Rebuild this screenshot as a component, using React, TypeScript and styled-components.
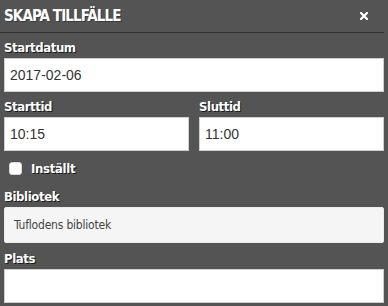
import styled, { createGlobalStyle } from "styled-components";

const GlobalStyle = createGlobalStyle`
   html, body {
      margin: 0;
      padding: 0;
      background: #545454;
   }
`;

const Dialog = styled.div`
   width: 388px;
   height: 306px;
   background: #545454;
   box-sizing: border-box;
   overflow: hidden;
   font-family: "DejaVu Sans Condensed", "DejaVu Sans", sans-serif;
`;

const Header = styled.div`
   display: flex;
   align-items: center;
   justify-content: space-between;
   height: 32px;
   margin-right: 4px;
   padding-left: 4px;
   padding-right: 16px;
   border-bottom: 1px solid #2f2f2f;
`;

const Title = styled.h1`
   margin: 0;
   font-size: 15px;
   font-weight: bold;
   color: #fff;
   text-transform: uppercase;
   letter-spacing: -0.9px;
   text-shadow: 1px 1px 0 #3a3a3a;
`;

const Close = styled.button`
   border: none;
   background: none;
   padding: 0;
   width: 8px;
   height: 8px;
   display: flex;
   cursor: pointer;
`;

const Form = styled.div`
   display: flex;
   flex-direction: column;
   padding: 7px 4px 0;
`;

const Field = styled.div<{ $gap?: number }>`
   display: flex;
   flex-direction: column;
   margin-bottom: ${(p) => p.$gap ?? 7}px;
`;

const Label = styled.label`
   display: block;
   font-size: 13px;
   line-height: 16px;
   font-weight: bold;
   color: #fff;
   letter-spacing: -0.4px;
   text-shadow: 1px 1px 0 #1a1a1a;
   margin-bottom: 2px;
`;

const Input = styled.input`
   box-sizing: border-box;
   width: 100%;
   height: 34px;
   margin: 0;
   padding: 0 5px;
   border: 1px solid #cfcfcf;
   background: #fff;
   font-family: "Liberation Sans", Arial, sans-serif;
   font-size: 14px;
   color: #333;
   outline: none;
`;

const ReadOnly = styled.div`
   box-sizing: border-box;
   height: 36px;
   display: flex;
   align-items: center;
   padding: 0 9px;
   background: #f5f5f5;
   border: 1px solid #ececec;
   border-radius: 2px;
   font-size: 12px;
   color: #444;
   letter-spacing: -0.2px;
`;

const TimeRow = styled.div`
   display: grid;
   grid-template-columns: 1fr 1fr;
   column-gap: 10px;
`;

const CheckRow = styled.label`
   display: flex;
   align-items: center;
   gap: 9px;
   height: 13px;
   padding-left: 5px;
   margin: 11px 0 14px;
   font-size: 13px;
   font-weight: bold;
   color: #fff;
   letter-spacing: -0.3px;
   text-shadow: 1px 1px 0 #1a1a1a;
`;

const Box = styled.span`
   width: 13px;
   height: 13px;
   box-sizing: border-box;
   border-radius: 3px;
   background: #fff;
   border: 1px solid #d8d8d8;
`;

export default function App() {
   return (
      <>
         <GlobalStyle />
         <Dialog>
            <Header>
               <Title>Skapa tillfälle</Title>
               <Close aria-label="Stäng">
                  <svg width="8" height="8" viewBox="0 0 8 8">
                     <path d="M1 1 L7 7 M7 1 L1 7" stroke="#fff" strokeWidth="2.2" strokeLinecap="square" />
                  </svg>
               </Close>
            </Header>
            <Form>
               <Field>
                  <Label>Startdatum</Label>
                  <Input defaultValue="2017-02-06" />
               </Field>
               <TimeRow>
                  <Field $gap={0}>
                     <Label>Starttid</Label>
                     <Input defaultValue="10:15" />
                  </Field>
                  <Field $gap={0}>
                     <Label>Sluttid</Label>
                     <Input defaultValue="11:00" />
                  </Field>
               </TimeRow>
               <CheckRow>
                  <Box />
                  Inställt
               </CheckRow>
               <Field $gap={8}>
                  <Label>Bibliotek</Label>
                  <ReadOnly>Tuflodens bibliotek</ReadOnly>
               </Field>
               <Field>
                  <Label>Plats</Label>
                  <Input />
               </Field>
            </Form>
         </Dialog>
      </>
   );
}
